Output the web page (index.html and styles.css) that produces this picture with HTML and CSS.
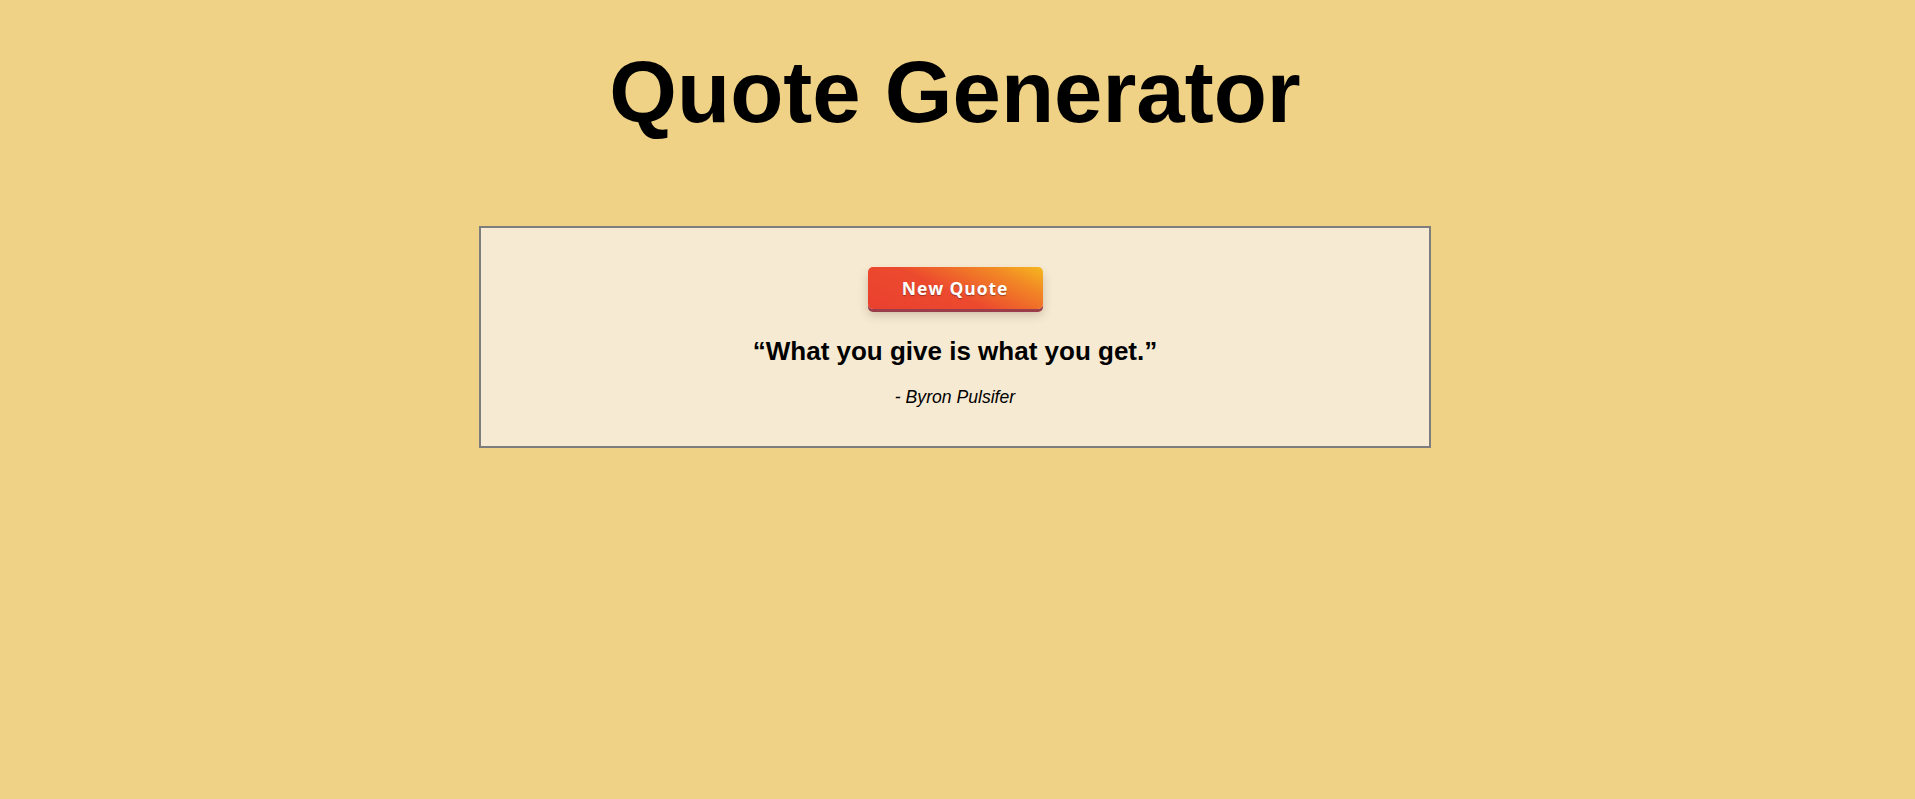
FILE: index.html
```html
<!DOCTYPE html>
<html lang="en">
<head>
<meta charset="utf-8">
<title>Quote Generator</title>
<link rel="stylesheet" href="styles.css">
</head>
<body>
  <main class="page">
    <h1 class="title">Quote Generator</h1>
    <section class="card">
      <button class="btn" type="button">New Quote</button>
      <p class="quote">“What you give is what you get.”</p>
      <p class="author">- Byron Pulsifer</p>
    </section>
  </main>
</body>
</html>
```

FILE: styles.css
```css
html, body {
  margin: 0;
  padding: 0;
}

body {
  background: #efd285;
  font-family: "Liberation Sans", Arial, sans-serif;
  color: #000;
  min-height: 799px;
}

.page {
  display: flex;
  flex-direction: column;
  align-items: center;
  padding-right: 5px;
}

.title {
  margin: 42px 0 84px;
  font-size: 87px;
  line-height: 100px;
  font-weight: 700;
}

.card {
  box-sizing: border-box;
  width: 952px;
  border: 2px solid #7d7d7d;
  background: #f6ead3;
  padding: 39px 20px;
  display: flex;
  flex-direction: column;
  align-items: center;
}

.btn {
  font-family: "Open Sans", "DejaVu Sans", sans-serif;
  font-weight: 700;
  font-size: 17.5px;
  letter-spacing: 0.9px;
  color: #fff;
  border: 0;
  border-radius: 5px;
  height: 42px;
  width: 175px;
  padding: 0;
  background: linear-gradient(25deg, #e9402f 0%, #ec4a2e 45%, #f28a25 80%, #f6b81f 100%);
  box-shadow: 0 3px 0 #9b3c4a, 0 6px 10px rgba(90, 60, 30, 0.25);
  text-shadow: 0 1px 1px rgba(0, 0, 0, 0.35);
  cursor: pointer;
}

.quote {
  margin: 27px 0 0;
  font-size: 26px;
  line-height: 30px;
  font-weight: 700;
}

.author {
  margin: 21px 0 0;
  font-size: 17.6px;
  line-height: 20px;
  font-style: italic;
}
```
